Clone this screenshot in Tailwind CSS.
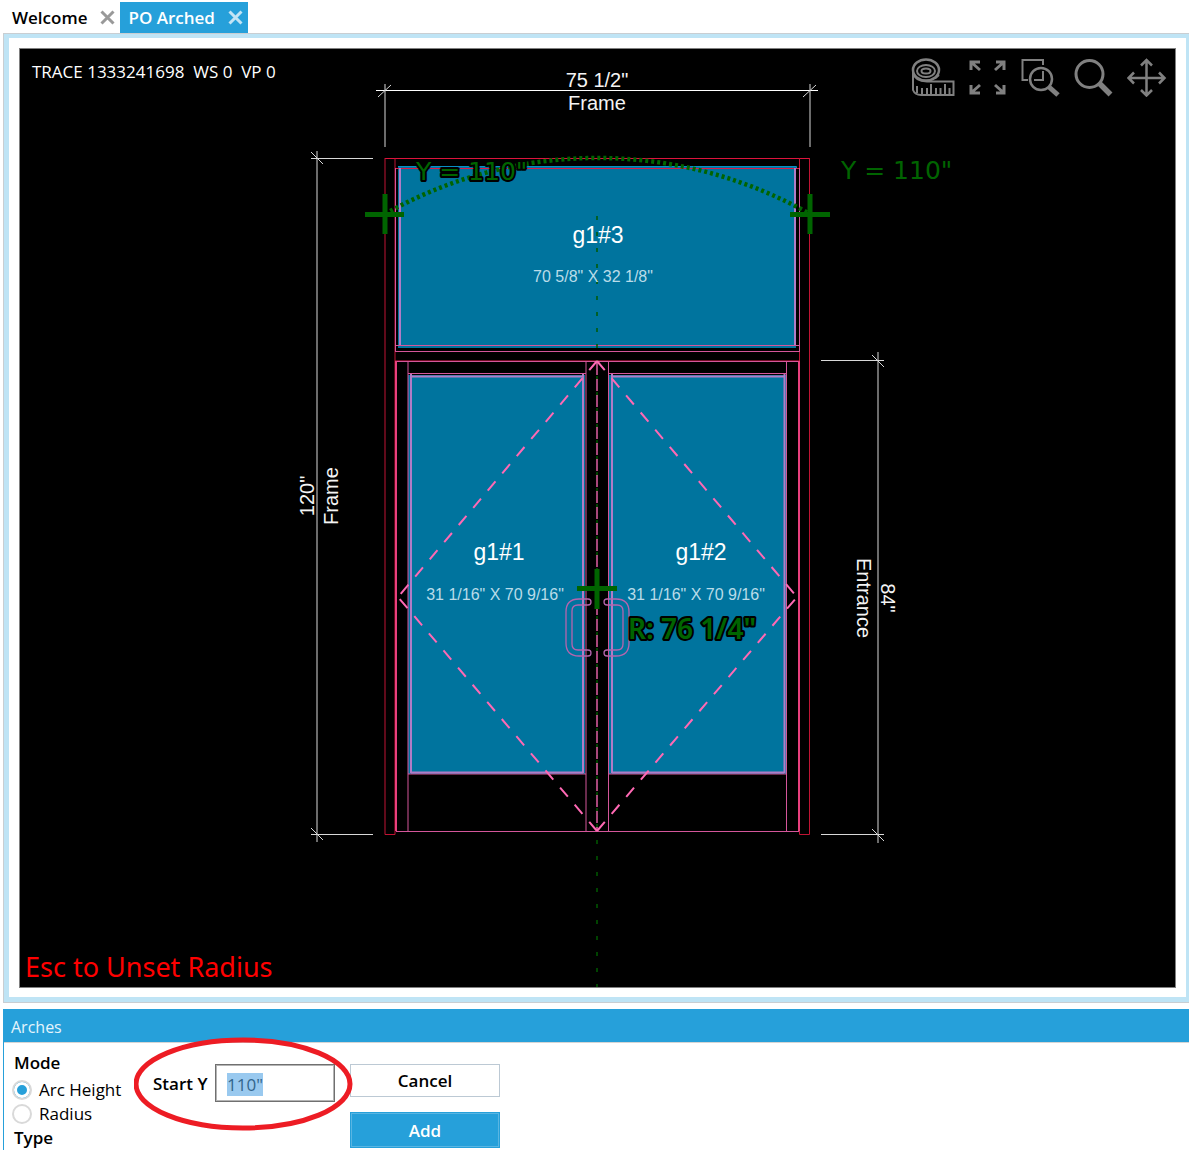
<!DOCTYPE html>
<html lang="en">
<head>
<meta charset="utf-8">
<title>PO Arched</title>
<script src="https://cdn.jsdelivr.net/npm/@tailwindcss/browser@4"></script>
</head>
<body class="bg-white text-black font-['Open_Sans','Noto_Sans',sans-serif]">
<nav class="flex h-[33px] items-end pl-1 text-[17px] font-semibold leading-6">
  <div class="flex h-[31px] items-center gap-[13px] pl-2 pr-[5px]">
    <a href="#welcome">Welcome</a>
    <button type="button" aria-label="Close Welcome"><svg class="block size-[15px]" viewBox="0 0 15 15"><path d="M1.500 1.500l12 12M13.500 1.500l-12 12" stroke="#999" stroke-width="3"/></svg></button>
  </div>
  <div class="flex h-[31px] items-center gap-[13px] bg-[#26a0da] pl-2 pr-[5px] text-white">
    <a href="#po-arched">PO Arched</a>
    <button type="button" aria-label="Close PO Arched"><svg class="block size-[15px]" viewBox="0 0 15 15"><path d="M1.500 1.500l12 12M13.500 1.500l-12 12" stroke="#c3e4f5" stroke-width="3"/></svg></button>
  </div>
</nav>

<main class="ml-[3px] border-y border-l border-[#c9ced2]">
  <div class="border-4 border-b-[5px] border-l-[5px] border-r-[3px] border-[#bfe4f5] px-[10px] pb-[9px] pt-[10px]">
    <div class="relative border border-[#808080] bg-black">
      <svg class="block h-auto w-full" viewBox="20 49 1155 938" fill="none" role="img" aria-label="Arched entrance elevation">
        <!-- glass lites -->
        <g fill="#00749e">
          <rect x="398" y="166" width="398" height="182"/>
          <rect x="408" y="375" width="177" height="399"/>
          <rect x="609" y="375" width="178" height="399"/>
        </g>
        <path d="M398 166.500H796.500V168" stroke="#0a8fc4"/>
        <!-- frame -->
        <g stroke="#c41230">
          <path d="M385 158.500H810" stroke="#dc143c"/>
          <path d="M385 158V834.500H395V158" stroke="#c01434"/>
          <path d="M809.500 158V834.500H799.500V158" stroke="#c01434"/>
          <path d="M395 168.500H800M395 361H800" stroke="#e01848"/>
        </g>
        <!-- pink members -->
        <g stroke="#d4569a">
          <path d="M395.500 168V352M799.500 168V352"/>
          <path d="M400 168V346M795 168V346" stroke="#b07cc6" stroke-width="2"/>
          <path d="M395 345.500H800M395 351.500H800M396 361.500H799"/>
          <path d="M396 361V831M799 361V831" stroke="#e8407e" stroke-width="2"/>
          <path d="M408 361V831M586 361V831M608.500 361V831M786.500 361V831M396 831.500H799"/>
          <path d="M408 373.500H586M608 373.500H787M408 774H586M608 774H787"/>
          <path d="M411 374V773M583 374V773M612 374V773M784.500 374V773M411 376.500H583M612 376.500H784M411 772.500H583M612 772.500H784" stroke="#b07cc6" stroke-width="2"/>
        </g>
        <!-- centre line -->
        <path d="M597 216V987" stroke="#005a00" stroke-width="1.500" stroke-dasharray="4 12"/>
        <path d="M597 363V831" stroke="#e05fa4" stroke-width="1.500" stroke-dasharray="12 4"/>
        <!-- door swings -->
        <g stroke="#ff69b4" stroke-width="2" stroke-dasharray="12 10.500">
          <path d="M597 361L398 597"/><path d="M597 361L797 597"/>
          <path d="M597 831L398 597"/><path d="M597 831L797 597"/>
        </g>
        <!-- pull handles -->
        <g stroke="#b565ae" stroke-width="1.300">
          <path d="M588 599H579Q566 599 566 612V643Q566 656 579 656H588A3 3 0 0 0 588 650H578Q572 650 572 644V611Q572 605 578 605H588A3 3 0 0 0 588 599"/>
          <path d="M607 599H616Q629 599 629 612V643Q629 656 616 656H607A3 3 0 0 1 607 650H617Q623 650 623 644V611Q623 605 617 605H607A3 3 0 0 1 607 599"/>
        </g>
        <!-- dimension lines -->
        <g stroke="#d8d8d8">
          <path d="M376 90.500H818" stroke="#fff"/>
          <path d="M385 84V147M810 84V147M378 97L391 85M803 97L816 85"/>
          <path d="M317 151V842M311 158.500H373M311 834.500H373M311 152L323 164M311 828L323 840"/>
          <path d="M878 352V843M821 360.500H884M821 834.500H884M872 355L884 367M872 829L884 841"/>
        </g>
        <g class="font-['Liberation_Sans',Arial,sans-serif] text-[20px]" fill="#f4f4f4" text-anchor="middle">
          <text x="597" y="87">75 1/2"</text>
          <text x="597" y="110">Frame</text>
          <text transform="translate(314 496) rotate(-90)">120"</text>
          <text transform="translate(338 496) rotate(-90)">Frame</text>
          <text transform="translate(857 598) rotate(90)">Entrance</text>
          <text transform="translate(881 598) rotate(90)">84"</text>
        </g>
        <g class="font-['Liberation_Sans',Arial,sans-serif] text-[23px]" fill="#fff" text-anchor="middle">
          <text x="598" y="243">g1#3</text>
          <text x="499" y="560">g1#1</text>
          <text x="701" y="560">g1#2</text>
        </g>
        <g class="font-['Liberation_Sans',Arial,sans-serif] text-[16px]" fill="#b9dce9" text-anchor="middle">
          <text x="593" y="282">70 5/8" X 32 1/8"</text>
          <text x="495" y="600">31 1/16" X 70 9/16"</text>
          <text x="696" y="600">31 1/16" X 70 9/16"</text>
        </g>
        <!-- arch guide -->
        <g stroke="#006400">
          <path d="M385 214A431 431 0 0 1 810 214" stroke-width="4.500" stroke-dasharray="3 3"/>
          <path d="M365 214.500H404M385 194V234M790 214.500H830M810 194V234M577 588.500H617M597 569V609" stroke-width="5"/>
        </g>
        <g fill="#006400" stroke-linejoin="round" paint-order="stroke">
          <text x="416" y="180" class="font-['DejaVu_Sans',sans-serif] text-[25px]" stroke="#000" stroke-width="4">Y = 110"</text>
          <text x="841" y="179" class="font-['DejaVu_Sans',sans-serif] text-[25px]">Y = 110"</text>
          <text x="628" y="639" class="font-['Noto_Sans',sans-serif] text-[28px] font-semibold" stroke="#000" stroke-width="4">R: 76 1/4"</text>
        </g>
      </svg>
      <p class="absolute left-3 top-[11px] text-[17px] leading-6 text-white">TRACE 1333241698&nbsp; WS 0&nbsp; VP 0</p>
      <p class="absolute bottom-[2px] left-[5px] text-[27px] leading-9 text-[#f00] font-['Noto_Sans','Open_Sans',sans-serif]">Esc to Unset Radius</p>
      <div class="absolute right-2 top-2 flex gap-[13px] text-[#808080]">
        <button type="button" aria-label="Measure"><svg class="block h-10 w-11" viewBox="0 0 44 40" fill="none" stroke="currentColor" stroke-width="2"><ellipse cx="15" cy="13" rx="13" ry="10.500" stroke-width="2.500"/><ellipse cx="15" cy="14" rx="9" ry="6"/><ellipse cx="15" cy="14" rx="4.500" ry="2.500"/><path d="M2 13V33Q4 38 10 38H42.500V24.500H16Q4 24 2 16M24 21.500L28 18M6 29V36M11 31V38M16 31V38M20 27V38M25 31V38M29.500 31V38M34 27V38M38.500 31V38"/></svg></button>
        <button type="button" aria-label="Zoom to fit"><svg class="block size-10" viewBox="0 0 40 40" fill="none" stroke="currentColor" stroke-width="3"><path d="M3 13V5H12M3 5L12 13M28 5H36V13M36 5L27 13M3 28V36H12M3 36L12 28M28 36H36V28M36 36L27 28"/></svg></button>
        <button type="button" aria-label="Zoom window"><svg class="block size-10" viewBox="0 0 40 40" fill="none" stroke="currentColor" stroke-width="2"><path d="M22 8V3H1.500V23H7M22 14V23H13"/><circle cx="20" cy="22" r="11" stroke-width="2.500"/><path d="M28 30L37 38" stroke-width="5"/></svg></button>
        <button type="button" aria-label="Zoom"><svg class="block size-10" viewBox="0 0 40 40" fill="none" stroke="currentColor"><circle cx="15.500" cy="17" r="13.500" stroke-width="3"/><path d="M25 26L36.500 37.500" stroke-width="5.500"/></svg></button>
        <button type="button" aria-label="Pan"><svg class="block size-10" viewBox="0 0 40 40" fill="none" stroke="currentColor" stroke-width="2.500"><path d="M19.500 3V38M2 21H37M14 8.500L19.500 3L25 8.500M14 33L19.500 38.500L25 33M7 15.500L1.500 21L7 26.500M32 15.500L37.500 21L32 26.500"/></svg></button>
      </div>
    </div>
  </div>
</main>

<section class="relative ml-[3px] mt-[6px] overflow-hidden border-l border-[#26a0da]">
  <h2 class="h-[33px] bg-[#26a0da] pl-[7px] text-base leading-9 text-[#e4f4fc]">Arches</h2>
  <form class="flex items-start border-t border-[#d5d5d5] pl-2" onsubmit="return false">
    <div class="w-[141px] pt-2 text-[17px] leading-6">
      <div role="radiogroup" aria-labelledby="mode-title">
        <p id="mode-title" class="mb-[3px] pl-[2px] font-semibold">Mode</p>
        <label class="flex items-center gap-[7px]"><input type="radio" name="mode" checked class="size-5 appearance-none rounded-full border-2 border-[#d9d9d9] bg-white checked:bg-[#26a0da] checked:shadow-[inset_0_0_0_3px_#fff]"><span>Arc Height</span></label>
        <label class="flex items-center gap-[7px]"><input type="radio" name="mode" class="size-5 appearance-none rounded-full border-2 border-[#d9d9d9] bg-white checked:bg-[#26a0da] checked:shadow-[inset_0_0_0_3px_#fff]"><span>Radius</span></label>
      </div>
      <p class="pl-[2px] font-semibold">Type</p>
    </div>
    <div class="mt-[21px] flex items-center gap-[7px]">
      <label for="start-y" class="w-[55px] whitespace-nowrap pt-[2px] text-[17px] font-semibold">Start Y</label>
      <input id="start-y" type="text" value='110"' class="h-[38px] w-[120px] border border-[#707070] pl-[11px] pt-[2px] text-[17px] shadow-[inset_0_0_0_1px_#b4b4b4] outline-none selection:bg-[#99c9ef] selection:text-[#33658c]">
    </div>
    <div class="ml-[15px] mt-[21px] flex w-[150px] flex-col gap-[15px] text-[17px] font-semibold">
      <button type="button" class="h-[33px] border border-[#bcc9d4]">Cancel</button>
      <button type="submit" class="h-9 border border-[#26a0da] bg-[#26a0da] pt-[2px] text-white shadow-[inset_0_0_0_1px_#59b5e2]">Add</button>
    </div>
  </form>
  <svg class="pointer-events-none absolute left-[130px] top-7 h-[94px] w-[220px]" viewBox="0 0 220 94" fill="none"><ellipse cx="109" cy="47" rx="107" ry="44" stroke="#ed1c24" stroke-width="5"/></svg>
</section>
<script>
  const startY = document.getElementById('start-y');
  startY.focus({ preventScroll: true });
  startY.select();
</script>
</body>
</html>
